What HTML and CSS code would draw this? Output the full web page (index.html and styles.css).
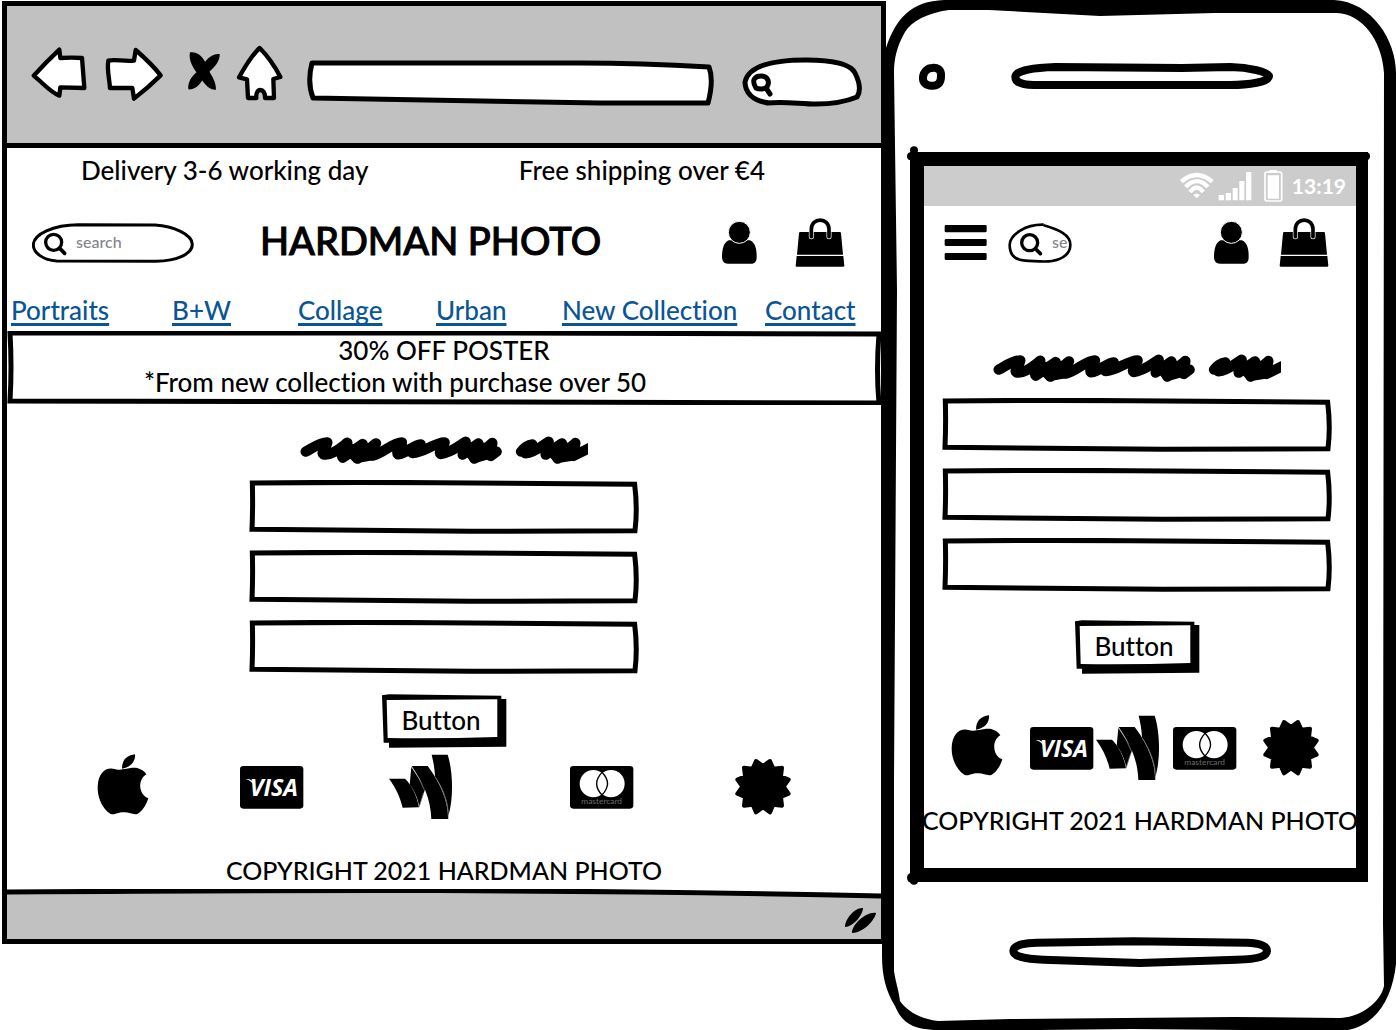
FILE: index.html
```html
<!DOCTYPE html>
<html lang="en">
<head>
<meta charset="utf-8">
<meta name="viewport" content="width=device-width, initial-scale=1">
<title>Hardman Photo</title>
<link rel="stylesheet" href="styles.css">
</head>
<body>
<svg class="defs" aria-hidden="true">
  <symbol id="scribble" viewBox="180 42 864 96">
    <g stroke="#000" stroke-width="31" stroke-linecap="round" stroke-linejoin="round">
      <path d="M197 95 C215 86 240 66 262 67 C262 80 240 95 250 103 C275 108 300 85 322 68 C322 85 300 105 308 113 L368 72 L352 116 L408 70 C400 90 380 100 398 107 C430 100 460 66 486 67 C486 80 466 95 474 103 C500 100 520 75 542 73 C530 85 510 92 517 99 C550 100 585 66 614 67 C614 80 592 95 602 102 C630 100 655 78 677 65 L668 104 L715 70 L703 116 L757 69 L752 108 L770 95" fill="none"/>
      <path d="M325 88 L400 84 L392 106 L350 114Z M678 84 L752 84 L765 96 L703 114Z M925 84 L1004 84 L1000 106 L953 114Z"/>
      <path d="M843 95 C850 84 865 74 877 73 C870 85 850 92 856 100 C885 98 905 78 926 65 L917 104 L966 70 L953 116 L1006 69 L1000 108 L1060 78" fill="none"/>
    </g>
  </symbol>
  <symbol id="field" viewBox="36 174 1170 162" preserveAspectRatio="none">
    <path d="M46 183 Q300 180 600 182 L1193 187 Q1202 260 1194 326 L700 328 L45 322 Q48 250 46 183Z" fill="#fff" stroke="#000" stroke-width="15"/>
  </symbol>
  <symbol id="button" viewBox="904 42 375 162" preserveAspectRatio="none">
    <path d="M924 57 H1277 V200 L925 203Z M904 46 L925 43 L1262 47 V188 H909Z"/>
    <path d="M918 60 L1250 58 V171 Q1080 176 921 174Z" fill="#fff"/>
  </symbol>
  <symbol id="person" viewBox="840 204 120 150">
    <path d="M866 271 C850 278 846 300 846 322 C847 335 852 341 864 341 H932 C946 341 950 333 950 320 C950 298 946 278 930 271Z"/>
    <circle cx="898" cy="247" r="33" stroke="#fff" stroke-width="3"/>
  </symbol>
  <symbol id="bag" viewBox="1065 204 150 150">
    <path d="M1081 246 H1199 Q1203 246 1203 250 L1209 314 H1071 L1077 250 Q1077 246 1081 246Z M1070 318 H1210 L1213 347 Q1213 350 1209 350 H1071 Q1067 350 1067 347Z"/>
    <path d="M1114 260 V238 C1114 201 1167 201 1167 238 V260" fill="none" stroke="#fff" stroke-width="15" stroke-linecap="round"/>
    <path d="M1114 260 V238 C1114 201 1167 201 1167 238 V260" fill="none" stroke="#000" stroke-width="11" stroke-linecap="round"/>
  </symbol>
  <symbol id="apple" viewBox="51 222 198 198">
    <path d="M128 268 C150 264 160 262 172 264 C185 268 194 274 199 283 C171 300 177 345 205 355 C198 378 185 395 172 402 C158 405 148 396 130 397 C112 397 105 406 92 402 C65 385 52 350 53 320 C55 280 75 263 98 266 C110 268 118 271 128 268Z"/>
    <path d="M126 266 C126 240 140 226 165 223 C167 245 152 262 126 266Z"/>
  </symbol>
  <symbol id="wallet" viewBox="927 222 198 198">
    <path d="M994 261 L1036 325 L1018 380 C1012 350 1002 330 989 314Z"/>
    <path d="M927 296 H975 C995 315 1012 350 1017 382 L968 383 C960 350 948 325 927 296Z"/>
    <path d="M1055 224 H1103 C1118 270 1122 350 1105 408 C1102 360 1085 320 1065 290 C1064 265 1060 245 1055 224Z"/>
    <path d="M995 258 H1043 C1075 300 1104 355 1105 417 H1054 C1052 355 1030 310 995 258Z"/>
    <path d="M1017 382 L1031 338 M995 260 Q1018 292 1033 330 M1065 290 C1088 325 1106 365 1105 412" fill="none" stroke="#999" stroke-width="2"/>
  </symbol>
  <symbol id="badge" viewBox="706 42 198 198">
    <path transform="translate(790 140)" d="M62 0 L77 21 L54 31 L57 57 L31 54 L21 77 L0 62 L-21 77 L-31 54 L-57 57 L-54 31 L-77 21 L-62 0 L-77 -21 L-54 -31 L-57 -57 L-31 -54 L-21 -77 L0 -62 L21 -77 L31 -54 L57 -57 L54 -31 L77 -21Z" stroke="#000" stroke-width="12" stroke-linejoin="round"/>
  </symbol>
</svg>

<main class="stage">
  <section class="window" aria-label="Desktop">
    <div class="toolbar">
      <button class="tool" type="button" aria-label="Back"><svg width="62" height="64" viewBox="84 132 186 192"><path class="ink-13" d="M101 227 Q140 185 178 149 L181 174 Q215 172 246 174 L253 264 L181 262 L178 287 C150 276 130 250 101 227Z"/></svg></button>
      <button class="tool" type="button" aria-label="Forward"><svg width="64" height="64" viewBox="306 132 192 192"><path class="ink-13" d="M325 182 C345 177 370 185 402 182 L407 150 C430 170 460 198 482 226 Q445 262 402 296 L397 264 L330 264 C328 235 320 205 325 182Z"/></svg></button>
      <button class="tool" type="button" aria-label="Stop"><svg width="46" height="64" viewBox="534 132 138 192"><path d="M570 157 C602 152 618 185 630 218 Q648 245 648 269 C622 272 608 242 592 220 C573 197 566 175 570 157Z"/><path d="M659 162 C629 158 612 190 595 212 C572 230 563 248 565 268 C590 271 605 245 620 222 C650 198 660 180 659 162Z"/></svg></button>
      <button class="tool" type="button" aria-label="Home"><svg width="54" height="64" viewBox="708 132 162 192"><path class="ink-13" d="M779 144 C800 165 825 200 841 231 L820 237 L822 294 L795 294 C797 262 765 262 769 294 L744 294 L741 238 L717 232 C735 200 755 165 779 144Z"/></svg></button>
      <label class="address">
        <svg class="shape" viewBox="302 44 422 64" preserveAspectRatio="none" aria-hidden="true"><path d="M312 63 L580 63 Q640 63 709 67 Q714 80 708 103 H600 L313 98 Q307 82 312 63Z" fill="#fff" stroke="#000" stroke-width="5" stroke-linejoin="round"/></svg>
        <input type="text" aria-label="Address">
      </label>
      <label class="lookup">
        <svg class="shape" viewBox="736 44 132 64" aria-hidden="true"><path d="M769 103 C752 101 745 92 745 82 C748 67 770 60 806 60 C835 60 851 65 855 73 C860 83 861 91 857 97 C845 102 830 104 816 104 C800 104 785 101 767 103" fill="#fff" stroke="#000" stroke-width="5" stroke-linecap="round"/><path d="M756 88 C751 80 755 76 761 76 C768 76 770 82 767 87 C764 90 758 89 756 88Z M766 88 L770 94" fill="none" stroke="#000" stroke-width="5" stroke-linecap="round"/></svg>
        <input type="text" aria-label="Web search">
      </label>
    </div>

    <div class="promos"><span>Delivery 3-6 working day</span><span>Free shipping over €4</span></div>

    <header class="masthead">
      <label class="search">
        <svg class="shape" viewBox="96 216 486 120" aria-hidden="true"><path d="M235 221 L465 222 C520 225 577 250 577 280 C577 310 530 329 468 331 L170 330 C130 328 100 305 100 282 C100 250 160 221 235 221Z" fill="#fff" stroke="#000" stroke-width="9"/><circle cx="161" cy="274" r="24" fill="none" stroke="#000" stroke-width="10"/><path d="M180 293 L194 307" stroke="#000" stroke-width="11" stroke-linecap="round"/></svg>
        <input type="text" placeholder="search" aria-label="Search">
      </label>
      <h1>HARDMAN PHOTO</h1>
      <svg class="person" role="img" aria-label="Account"><use href="#person"/></svg>
      <svg class="bag" role="img" aria-label="Bag"><use href="#bag"/></svg>
    </header>

    <nav class="links">
      <a href="#">Portraits</a><a href="#">B+W</a><a href="#">Collage</a><a href="#">Urban</a><a href="#">New Collection</a><a href="#">Contact</a>
    </nav>

    <div class="offer">
      <svg class="shape" viewBox="0 0 874 74" preserveAspectRatio="none" aria-hidden="true"><path d="M3 2 H500 L872 3 Q869 40 872 72 L500 71 L3 70 Q5 36 3 2Z" fill="#fff" stroke="#000" stroke-width="5"/></svg>
      <p>30% OFF POSTER</p>
      <p class="terms">*From new collection with purchase over 50</p>
    </div>

    <form class="form">
      <svg class="scribble" aria-hidden="true"><use href="#scribble"/></svg>
      <label class="field"><svg class="shape" aria-hidden="true"><use href="#field"/></svg><input type="text" aria-label="First field"></label>
      <label class="field"><svg class="shape" aria-hidden="true"><use href="#field"/></svg><input type="text" aria-label="Second field"></label>
      <label class="field"><svg class="shape" aria-hidden="true"><use href="#field"/></svg><input type="text" aria-label="Third field"></label>
      <button class="submit" type="button"><svg class="shape" aria-hidden="true"><use href="#button"/></svg><span>Button</span></button>
    </form>

    <div class="payments">
      <svg role="img" aria-label="Apple"><use href="#apple"/></svg>
      <svg viewBox="479 222 198 198">
        <rect x="479" y="258" width="190" height="128" rx="10"/>
        <text class="visa" x="508" y="348">VISA</text>
        <path d="M496 297 C512 297 520 302 521 318 C516 306 508 300 496 297Z" fill="#fff"/>
      </svg>
      <svg role="img" aria-label="Wallet"><use href="#wallet"/></svg>
      <svg viewBox="208 42 198 198">
        <rect x="208" y="78" width="190" height="128" rx="10"/>
        <circle cx="278" cy="131" r="41" fill="#fff"/>
        <circle cx="331" cy="131" r="41" fill="#fff"/>
        <path d="M304 97 Q272 131 304 165 Q337 131 304 97Z" fill="#fff" stroke="#000" stroke-width="4"/>
        <text class="mastercard" x="303" y="192">mastercard</text>
      </svg>
      <svg role="img" aria-label="Badge"><use href="#badge"/></svg>
    </div>
    <p class="copyright">COPYRIGHT 2021 HARDMAN PHOTO</p>

    <div class="statusline">
      <svg class="shape" viewBox="0 0 874 50" preserveAspectRatio="none" aria-hidden="true"><path d="M0 3 C300 1 560 0 874 7 V50 H0Z" fill="#c1c1c1"/><path d="M0 3 C300 1 560 0 874 7" fill="none" stroke="#000" stroke-width="5"/></svg>
      <svg class="grip" viewBox="843 905 36 32" aria-hidden="true"><path d="M863 908 C855 907 845 919 845 927 C853 927 863 915 863 908Z M876 913 C867 911 852 924 852 933 C863 933 875 920 876 913Z"/></svg>
    </div>
  </section>

  <section class="phone" aria-label="Mobile">
    <svg class="shape" viewBox="0 0 514 1030" preserveAspectRatio="none" aria-hidden="true">
      <path d="M2 55 C12 18 30 1 62 0 H452 C490 2 514 40 514 73 V963 C510 1000 492 1028 458 1030 L250 1028 L65 1030 C50 1029 38 1028 31 1025 C20 1020 16 1012 13 1005 C4 990 0 975 0 955 L1 400Z"/>
      <path d="M67 10 C45 13 30 21 23 32 C15 46 12 58 12 73 L15 290 L12 780 V970 C14 983 16 986 18 1000 C25 1010 38 1018 56 1020 L128 1018 L351 1016 L458 1017 C480 1016 499 1000 502 985 L501 923 L502 73 C500 40 480 14 455 13 L333 13 L218 16 L107 10Z" fill="#fff"/>
      <circle cx="32" cy="150" r="4"/><circle cx="29" cy="156" r="4"/><circle cx="484" cy="156" r="4"/><circle cx="30" cy="877" r="5"/><circle cx="32" cy="880" r="4"/>
    </svg>
    <div class="earpiece">
      <svg width="28" height="30" viewBox="108 189 84 90" aria-hidden="true"><path d="M150 207 C164 205 178 210 177 230 C178 254 165 261 149 260 C132 260 121 250 123 234 C125 217 138 207 150 207Z" fill="none" stroke="#000" stroke-width="24"/></svg>
      <svg width="264" height="28" viewBox="387 186 792 84" aria-hidden="true"><path d="M520 201 L900 204 L1045 201 C1100 202 1160 215 1161 229 C1160 246 1100 255 1045 255 H455 C415 255 400 244 400 230 C402 210 460 203 520 201Z" fill="none" stroke="#000" stroke-width="24"/></svg>
    </div>
    <div class="screen">
      <div class="status">
        <svg class="wifi" width="36" height="32" viewBox="60 30 108 96" aria-hidden="true"><path d="M67 65 Q113 25 160 65 M80 81 Q113 46 147 81 M93 96 Q113 70 133 96" fill="none" stroke="#fff" stroke-width="13"/><path d="M103 106 Q113 95 123 106 L113 115Z" fill="#fff"/></svg>
        <svg class="signal" width="36" height="32" viewBox="177 30 108 96" aria-hidden="true"><path d="M179 105h16v16h-16z M200 99h16v22h-16z M221 84h15v37h-15z M241 63h15v58h-15z M261 36h16v85h-16z" fill="#fff"/></svg>
        <svg class="battery" width="20" height="32" viewBox="315 30 60 96" aria-hidden="true"><rect x="318" y="36" width="50" height="87" rx="5" fill="none" stroke="#fff" stroke-width="5"/><path d="M331 30h22v8h-22z M326 46h34v70h-34z" fill="#fff"/></svg>
        <time>13:19</time>
      </div>
      <header class="appbar">
        <button class="tool" type="button" aria-label="Menu"><svg width="44" height="38" viewBox="186 678 132 114"><path d="M192 681h118q4 0 4 4v14q0 4-4 4H192q-4 0-4-4v-14q0-4 4-4z M192 723h118q4 0 4 4v13q0 4-4 4H192q-4 0-4-4v-13q0-4 4-4z M192 765h118q4 0 4 4v13q0 4-4 4H192q-4 0-4-4v-13q0-4 4-4z"/></svg></button>
        <label class="search small">
          <svg class="shape" viewBox="378 665 192 120" aria-hidden="true"><path d="M485 670 C430 669 383 700 383 731 C383 770 410 777 430 778 C460 779 490 783 510 779 C545 774 565 755 565 730 C565 700 530 685 485 672" fill="#fff" stroke="#000" stroke-width="8"/><circle cx="443" cy="724" r="24" fill="none" stroke="#000" stroke-width="10"/><path d="M461 743 L475 757" stroke="#000" stroke-width="11" stroke-linecap="round"/></svg>
          <input type="text" placeholder="search" aria-label="Search">
        </label>
        <svg class="person" role="img" aria-label="Account"><use href="#person"/></svg>
        <svg class="bag" role="img" aria-label="Bag"><use href="#bag"/></svg>
      </header>
      <form class="form">
        <svg class="scribble" aria-hidden="true"><use href="#scribble"/></svg>
        <label class="field"><svg class="shape" aria-hidden="true"><use href="#field"/></svg><input type="text" aria-label="First field"></label>
        <label class="field"><svg class="shape" aria-hidden="true"><use href="#field"/></svg><input type="text" aria-label="Second field"></label>
        <label class="field"><svg class="shape" aria-hidden="true"><use href="#field"/></svg><input type="text" aria-label="Third field"></label>
        <button class="submit" type="button"><svg class="shape" aria-hidden="true"><use href="#button"/></svg><span>Button</span></button>
      </form>
      <div class="payments">
        <svg role="img" aria-label="Apple"><use href="#apple"/></svg>
        <svg viewBox="479 222 198 198">
          <rect x="479" y="258" width="190" height="128" rx="10"/>
          <text class="visa" x="508" y="348">VISA</text>
          <path d="M496 297 C512 297 520 302 521 318 C516 306 508 300 496 297Z" fill="#fff"/>
        </svg>
        <svg role="img" aria-label="Wallet"><use href="#wallet"/></svg>
        <svg viewBox="208 42 198 198">
          <rect x="208" y="78" width="190" height="128" rx="10"/>
          <circle cx="278" cy="131" r="41" fill="#fff"/>
          <circle cx="331" cy="131" r="41" fill="#fff"/>
          <path d="M304 97 Q272 131 304 165 Q337 131 304 97Z" fill="#fff" stroke="#000" stroke-width="4"/>
          <text class="mastercard" x="303" y="192">mastercard</text>
        </svg>
        <svg role="img" aria-label="Badge"><use href="#badge"/></svg>
      </div>
      <p class="copyright">COPYRIGHT 2021 HARDMAN PHOTO</p>
    </div>
    <svg class="homebar" width="264" height="30" viewBox="327 740 792 90" aria-hidden="true"><path d="M410 757 L700 753 L1040 757 C1080 758 1101 767 1101 782 C1100 797 1080 806 1010 808 L720 818 L430 808 C370 806 340 797 340 781 C342 763 380 757 410 757Z" fill="none" stroke="#000" stroke-width="24"/></svg>
  </section>
</main>
</body>
</html>
```

FILE: styles.css
```css
* { box-sizing: border-box; }

body {
  margin: 0;
  background: #fff;
  color: #000;
  font: 500 26px/32px Lato, sans-serif;
  font-variant-ligatures: none;
}

p, h1 { margin: 0; }
svg { display: block; flex: none; }
.defs { position: absolute; width: 0; height: 0; }

button, input {
  font: inherit;
  color: inherit;
  background: none;
  border: 0;
  padding: 0;
  margin: 0;
}

input { outline: 0; }

/* Hand-drawn outline behind a control or panel */
.shape {
  position: absolute;
  inset: 0;
  width: 100%;
  height: 100%;
}

.shape ~ * { position: relative; }

.stage {
  display: grid;
  grid-template-columns: minmax(0, 882fr) minmax(0, 514fr);
  align-items: start;
}

/* Browser window */
.window {
  margin: 1px -4px 0 2px;
  border: 5px solid #000;
}

.toolbar {
  display: flex;
  gap: 12px;
  padding: 38px 13px 35px 21px;
  background: #c1c1c1;
  border-bottom: 5px solid #000;
}

.ink-13 {
  fill: #fff;
  stroke: #000;
  stroke-width: 13px;
  stroke-linejoin: round;
}

.address, .lookup { position: relative; height: 64px; }
.address { flex: 1; min-width: 0; }
.lookup { width: 132px; }
.address input { width: 100%; height: 64px; padding: 0 20px; }
.lookup input { width: 100%; height: 64px; padding: 0 12px 0 40px; }

.promos {
  display: flex;
  justify-content: space-between;
  padding: 6px 116px 32px 74px;
}

.masthead {
  display: flex;
  align-items: center;
  padding: 0 36px 0 25px;
}

.masthead h1 {
  flex: 1;
  padding: 0 0 6px 66px;
  font-size: 38px;
  line-height: 44px;
  font-weight: 500;
  white-space: nowrap;
  -webkit-text-stroke: 1px #000;
}

.person { width: 40px; height: 50px; }
.bag { width: 50px; height: 50px; margin-left: 35px; }

.search { position: relative; width: 162px; height: 40px; }
.search input {
  display: block;
  width: 100%;
  height: 40px;
  padding: 0 16px 4px 44px;
  font-size: 16px;
}
.search input::placeholder { color: #85858d; opacity: 1; }

.links {
  display: grid;
  grid-template-columns: 161fr 126fr 138fr 126fr 203fr 116fr;
  padding: 26px 0 5px 4px;
  white-space: nowrap;
}

.links a {
  justify-self: start;
  color: #0a5596;
  text-decoration-thickness: 3px;
  text-underline-offset: 3px;
  text-decoration-skip-ink: none;
}

.offer {
  position: relative;
  padding: 3px 10px 7px;
  text-align: center;
}
.offer .terms { padding-right: 98px; }

.form {
  display: flex;
  flex-direction: column;
  align-items: center;
  max-width: 390px;
  margin: 29px auto 0;
}

.scribble { width: 288px; height: 32px; margin-bottom: 14px; }
.field { position: relative; width: 100%; height: 54px; margin-bottom: 16px; }
.field input { width: 100%; height: 54px; padding: 0 16px; }

.submit {
  position: relative;
  width: 125px;
  height: 54px;
  margin-top: 4px;
  padding: 0 6px 2px 0;
}

.payments {
  display: grid;
  grid-template-columns: 143fr 149fr 181fr 165fr 146fr;
  padding: 6px 0 0 90px;
}
.payments svg { width: 66px; height: 66px; }

.visa {
  fill: #fff;
  font: italic 700 70px "Open Sans", sans-serif;
}
.mastercard {
  fill: #666;
  font-size: 25px;
  text-anchor: middle;
}

.copyright {
  display: flex;
  justify-content: center;
  padding: 34px 0 3px;
  font-size: 25px;
  white-space: nowrap;
}

.statusline {
  position: relative;
  display: flex;
  justify-content: flex-end;
  height: 50px;
  padding: 16px 2px 0 0;
}
.grip { width: 36px; height: 32px; }

/* Phone */
.phone { position: relative; }

.earpiece {
  display: flex;
  position: relative;
  gap: 65px;
  height: 152px;
  padding: 62px 0 0 36px;
}

.screen {
  min-height: 730px;
  margin: 0 28px;
  border: 14px solid #000;
  border-right-width: 12px;
  background: #fff;
  overflow: hidden;
}

.status {
  display: flex;
  align-items: center;
  justify-content: flex-end;
  height: 40px;
  padding-right: 10px;
  background: #ccc;
  color: #fff;
  font-weight: 700;
  font-size: 21px;
}
.signal { margin-left: 3px; }
.battery { margin: 0 8px 0 10px; }

.appbar {
  display: flex;
  align-items: center;
  padding: 12px 27px 0 20px;
}
.appbar .search { margin-left: 20px; }
.appbar .person { margin-left: auto; }
.appbar .bag { margin-left: 27px; }
.search.small { width: 64px; }
.search.small input { padding-right: 4px; }

.screen .form { margin: 84px 24px 0 18px; }
.screen .submit { margin-top: 12px; }

.screen .payments {
  grid-template-columns: 79fr 65fr 77fr 91fr 93fr;
  padding: 41px 0 0 27px;
}
.screen .copyright { padding: 23px 0 32px; }

.homebar { margin: 55px auto 64px 127px; position: relative; }
```
